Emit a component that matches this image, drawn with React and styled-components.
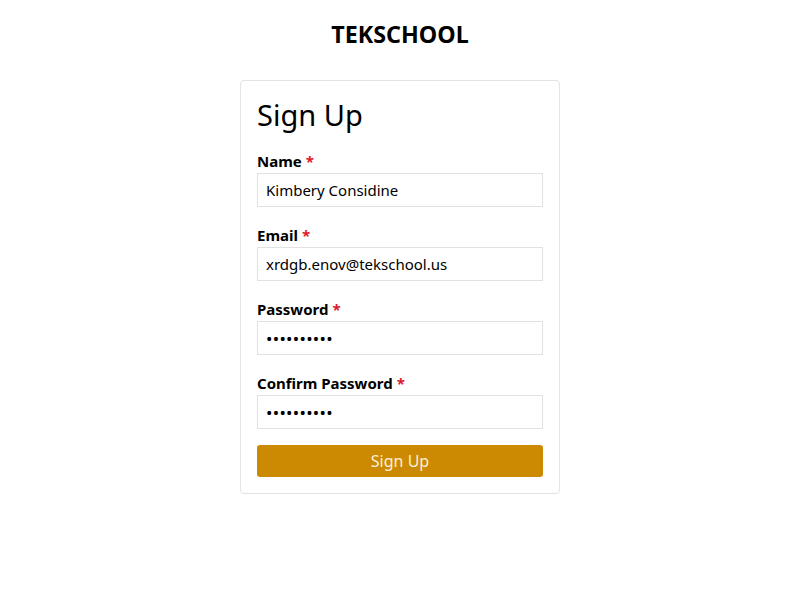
import React from "react";
import styled, { createGlobalStyle } from "styled-components";

const GlobalStyle = createGlobalStyle`
  body {
    margin: 0;
    background: #fff;
    font-family: "Noto Sans", "Open Sans", sans-serif;
    color: #000;
  }
`;

const fields = [
  { label: "Name", type: "text", value: "Kimbery Considine" },
  { label: "Email", type: "email", value: "xrdgb.enov@tekschool.us" },
  { label: "Password", type: "password", value: "abcdefghij" },
  { label: "Confirm Password", type: "password", value: "abcdefghij", focus: true },
];

function App() {
  return (
    <Page>
      <GlobalStyle />
      <Brand>TEKSCHOOL</Brand>
      <Card>
        <Title>Sign Up</Title>
        {fields.map((f) => (
          <Group key={f.label}>
            <Label>
              {f.label} <Star>*</Star>
            </Label>
            <Input
              type={f.type}
              defaultValue={f.value}
              autoFocus={f.focus}
              $secret={f.type === "password"}
            />
          </Group>
        ))}
        <Button>Sign Up</Button>
      </Card>
    </Page>
  );
}

const Page = styled.div`
  display: flex;
  flex-direction: column;
  align-items: center;
  padding-top: 19px;
`;

const Brand = styled.h1`
  margin: 0;
  font-size: 23.3px;
  font-weight: 700;
  line-height: 30px;
`;

const Card = styled.div`
  margin-top: 31px;
  width: 320px;
  box-sizing: border-box;
  border: 1px solid #e3e3e3;
  border-radius: 4px;
  padding: 15px 16px 16px;
  display: flex;
  flex-direction: column;
`;

const Title = styled.h2`
  margin: 0 0 15px;
  font-size: 29px;
  font-weight: 400;
  line-height: 38px;
`;

const Group = styled.div`
  display: flex;
  flex-direction: column;
  margin-bottom: 16px;
`;

const Label = styled.label`
  font-size: 15px;
  font-weight: 700;
  line-height: 24px;
`;

const Star = styled.span`
  color: #e0182d;
`;

const Input = styled.input`
  box-sizing: border-box;
  height: 34px;
  width: 100%;
  border: 1px solid #e2e2e2;
  border-radius: 0;
  padding: 0 8px;
  font-family: "Noto Sans", "Open Sans", sans-serif;
  font-size: ${(p) => (p.$secret ? "17px" : "15px")};
  letter-spacing: ${(p) => (p.$secret ? "0.3px" : "0")};
  color: #000;
  caret-color: #000;
  outline: none;
`;

const Button = styled.button`
  height: 32px;
  border: none;
  border-radius: 3px;
  background: #cc8902;
  color: #fbf1d8;
  font-family: "Noto Sans", "Open Sans", sans-serif;
  font-size: 16px;
  cursor: pointer;
`;

export default App;
